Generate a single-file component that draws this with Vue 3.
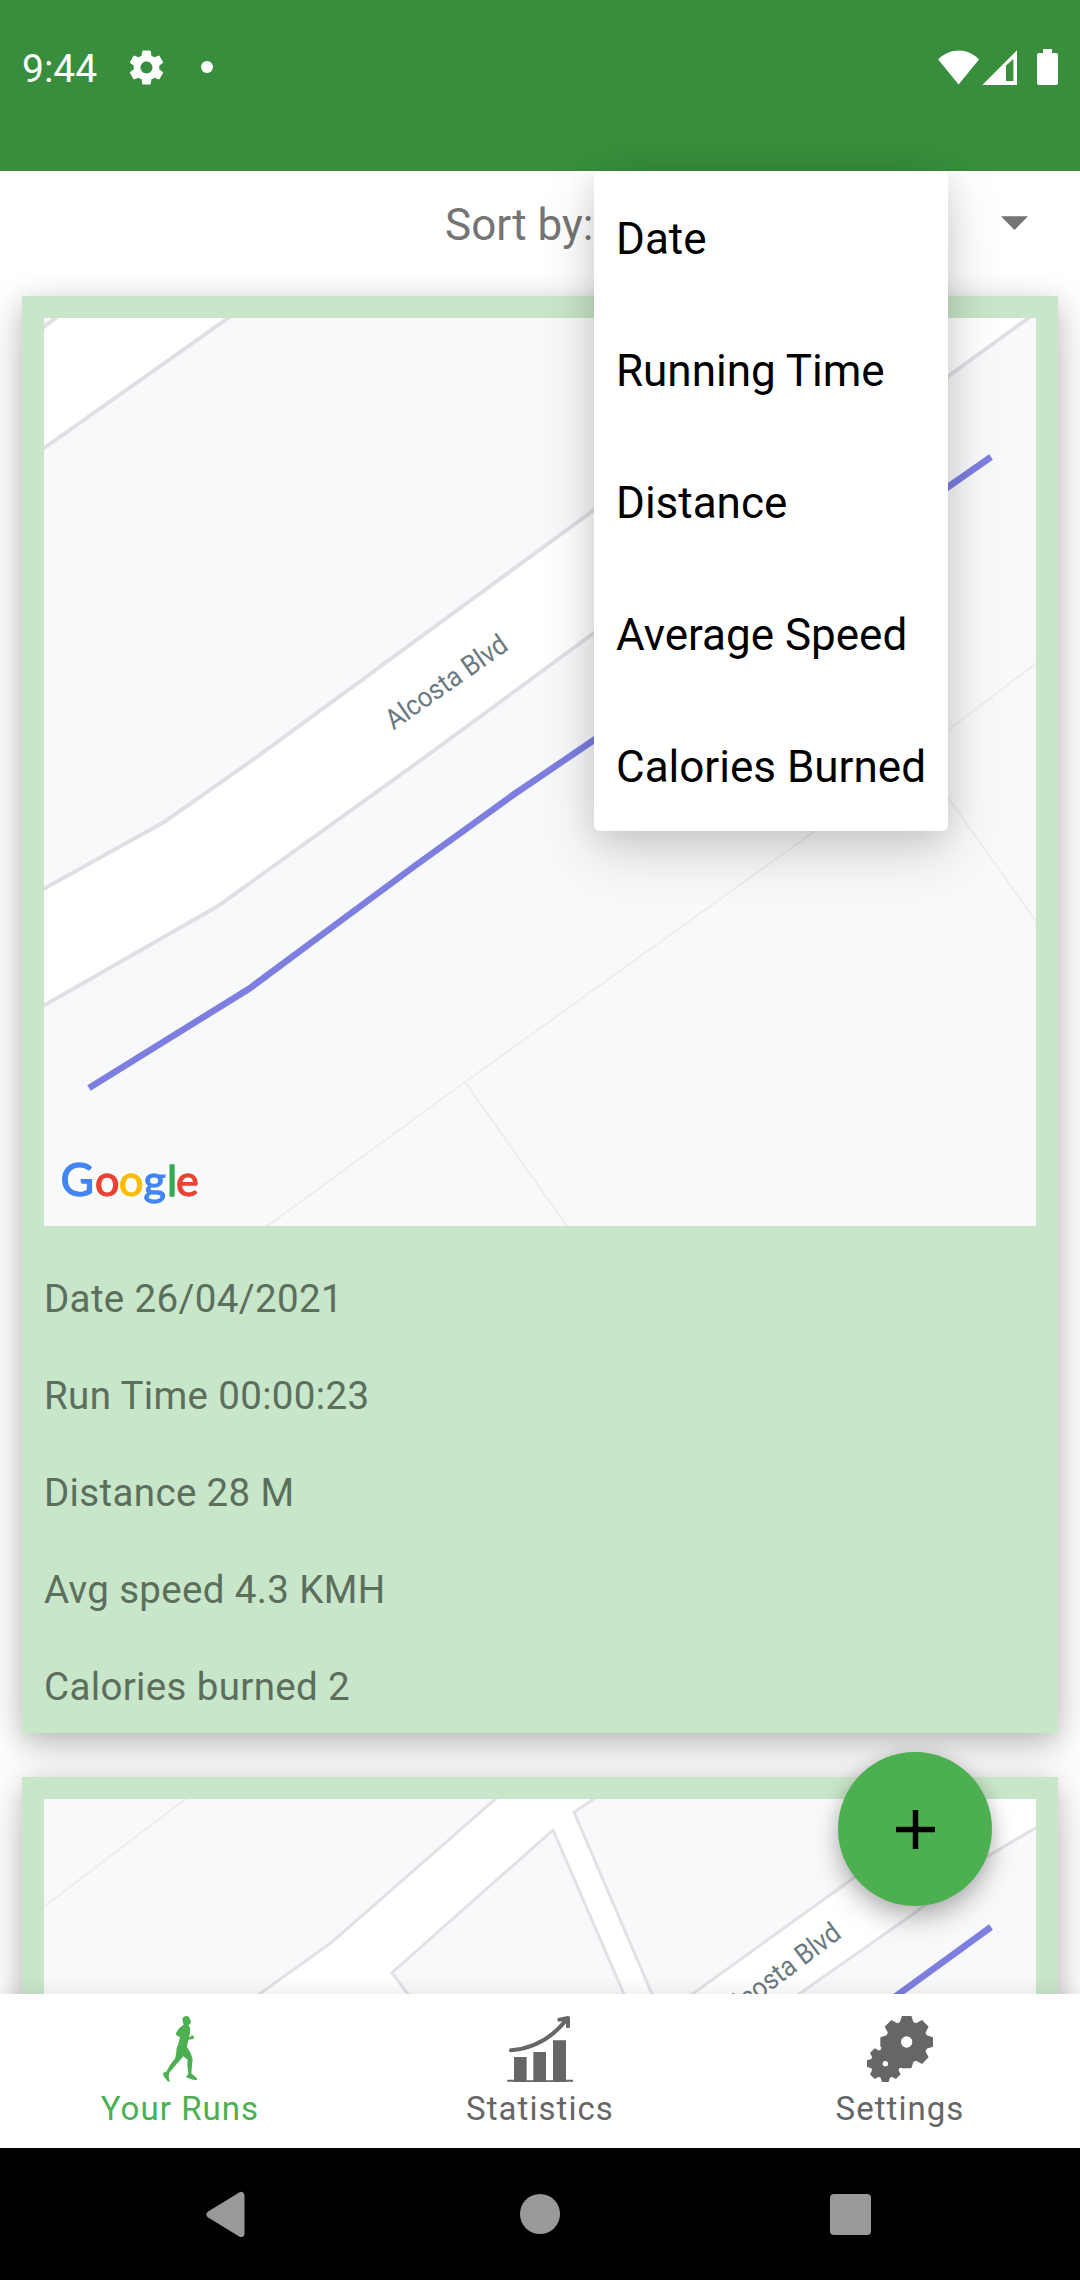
<script setup>
const sortOptions = ['Date', 'Running Time', 'Distance', 'Average Speed', 'Calories Burned']

const runDetails = [
  'Date 26/04/2021',
  'Run Time 00:00:23',
  'Distance 28 M',
  'Avg speed 4.3 KMH',
  'Calories burned 2',
]

// Outline of an eight-toothed gear with a round hole in the middle.
function gear(cx, cy, outer, inner, tip, base, hole) {
  const points = []
  for (let i = 0; i < 8; i++) {
    const a = (i * Math.PI) / 4
    const place = (r, w) => {
      const x = cx + r * Math.sin(a) + w * Math.cos(a)
      const y = cy - r * Math.cos(a) + w * Math.sin(a)
      return `${x.toFixed(1)} ${y.toFixed(1)}`
    }
    points.push(place(inner, -base), place(outer, -tip), place(outer, tip), place(inner, base))
  }
  return (
    `M${points.join('L')}Z` +
    `M${cx - hole} ${cy}a${hole} ${hole} 0 1 0 ${hole * 2} 0a${hole} ${hole} 0 1 0 ${-hole * 2} 0Z`
  )
}

const bigGear = gear(1340, 156, 79, 60, 14, 20, 17)
const smallGear = gear(1276, 221, 55, 42, 10, 14, 8)
</script>

<template>
  <div class="screen">
    <header class="status">
      <span class="clock">9:44</span>
      <svg class="status-gear" viewBox="0 0 24 24" width="41" height="41">
        <path d="M19.43 12.98c.04-.32.07-.64.07-.98s-.03-.66-.07-.98l2.11-1.65c.19-.15.24-.42.12-.64l-2-3.46c-.12-.22-.39-.3-.61-.22l-2.49 1c-.52-.4-1.08-.73-1.69-.98l-.38-2.65C14.46 2.18 14.25 2 14 2h-4c-.25 0-.46.18-.49.42l-.38 2.65c-.61.25-1.17.59-1.69.98l-2.49-1c-.23-.09-.49 0-.61.22l-2 3.46c-.13.22-.07.49.12.64l2.11 1.65c-.04.32-.07.65-.07.98s.03.66.07.98l-2.11 1.65c-.19.15-.24.42-.12.64l2 3.46c.12.22.39.3.61.22l2.49-1c.52.4 1.08.73 1.69.98l.38 2.65c.03.24.24.42.49.42h4c.25 0 .46-.18.49-.42l.38-2.65c.61-.25 1.17-.59 1.69-.98l2.49 1c.23.09.49 0 .61-.22l2-3.46c.12-.22.07-.49-.12-.64l-2.11-1.65zM12 15.5c-1.93 0-3.5-1.57-3.5-3.5s1.57-3.5 3.5-3.5 3.5 1.57 3.5 3.5-1.57 3.5-3.5 3.5z" fill="#fff" />
      </svg>
      <span class="dot"></span>
      <svg class="radios" viewBox="938 46 120 42" width="120" height="42" fill="#fff">
        <path d="M958.6 84.500L938.200 59.500C950 47.600 967.500 47.600 979 59.500Z" />
        <path d="M982.300 85L1017 50.200V85Z" />
        <path d="M1006 65.500L1013.400 59V81H1006Z" fill="#388e3c" />
        <path d="M1043 49h9v4h4q2 0 2 2v28q0 2-2 2h-17q-2 0-2-2v-28q0-2 2-2h4z" />
      </svg>
    </header>

    <div class="sort">
      <span class="sort-label">Sort by:</span>
      <svg class="caret" viewBox="0 0 27 14" width="27" height="14"><path d="M0 .3H27L13.500 14Z" fill="#757575" /></svg>
    </div>

    <main class="runs">
      <article class="card">
        <svg class="map" viewBox="44 318 992 908" width="992" height="908">
          <rect x="44" y="318" width="992" height="908" fill="#f8f9fb" />
          <g stroke="#dfe0e4" stroke-width="4" fill="#fff">
            <path d="M40 329L56 317H229L40 451Z" stroke="none" />
            <path d="M40 330L58 316M40 451L231 316" />
            <path d="M38 892L164.600 821.700L252.600 760L594 510L860 314H1034L594 633L421 760L218 906L38 1009Z" />
          </g>
          <path d="M266 1227L465 1082L815 831L1038 662M465 1082L569 1229M890 716L1040 927" fill="none" stroke="#e9eaec" stroke-width="1.500" />
          <path d="M89 1088L249.500 988.500L335 925L413.300 867L513 795L594 740L948 487L991 457" fill="none" stroke="#7d7ee0" stroke-width="6.500" />
          <text class="road" transform="translate(393.500 730.500) rotate(-35)" textLength="142" lengthAdjust="spacingAndGlyphs">Alcosta Blvd</text>
          <text class="logo" y="1195.500"><tspan x="60.500" font-size="46" fill="#4285f4" stroke="#4285f4">G</tspan><tspan x="95" fill="#ea4335" stroke="#ea4335">o</tspan><tspan x="119" fill="#fbbc05" stroke="#fbbc05">o</tspan><tspan x="143.500" fill="#4285f4" stroke="#4285f4">g</tspan><tspan x="167" fill="#34a853" stroke="#34a853">l</tspan><tspan x="176" fill="#ea4335" stroke="#ea4335">e</tspan></text>
        </svg>
        <div class="details">
          <p v-for="line in runDetails" :key="line">{{ line }}</p>
        </div>
      </article>

      <article class="card">
        <svg class="map" viewBox="44 1799 992 908" width="992" height="908">
          <rect x="44" y="1799" width="992" height="908" fill="#fff" />
          <g fill="#f8f9fb" stroke="#e1e2e5" stroke-width="3">
            <path d="M40 1795H500L332 1942L240 2008H40Z" />
            <path d="M553 1830L392 1972.700L418 2008H630Z" />
            <path d="M600 1795L574 1812L658 2008H673L854 1877.700L970 1795Z" />
            <path d="M1044 1823L988 1856L916 1912L779 2008H1044Z" />
          </g>
          <path d="M42 1908L187 1798" fill="none" stroke="#e9eaec" stroke-width="1.500" />
          <path d="M870 2015L991 1927" fill="none" stroke="#7d7ee0" stroke-width="6.500" />
          <text class="road" transform="translate(729.500 2022) rotate(-37)" textLength="142" lengthAdjust="spacingAndGlyphs">Alcosta Blvd</text>
        </svg>
      </article>
    </main>

    <nav class="tabs">
      <a class="tab active">
        <svg viewBox="81 78 198 198" width="66" height="66" fill="currentColor">
          <path d="M188 84Q192 78 199 78Q208 79 210 88L213 95Q212 104 205 106L210 113V130L207 140H212L215 136L221 137V147L205 149L201 170L212 190L218 208L216 225L214 250L230 264L231 269Q222 271 213 267L198 262L200 257L205 252L202 225L203 209L190 199L170 222L148 248L146 262L150 275L143 274L131 259L129 249L139 245L152 222L165 206L169 188Q168 175 175 162L180 142L169 136L168 129L178 114L191 104Q186 94 188 84Z" />
        </svg>
        <span>Your Runs</span>
      </a>
      <a class="tab">
        <svg viewBox="141 78 198 198" width="66" height="66" fill="currentColor">
          <path d="M162 201h38v70h20v-85h38v85h21v-120h39v118h21v6h-21v1H162v-1h-20v-6h20z" />
          <path d="M153 181Q252 173 318 91M298 89L324 84V109" fill="none" stroke="currentColor" stroke-width="12" stroke-linecap="round" stroke-linejoin="round" />
        </svg>
        <span>Statistics</span>
      </a>
      <a class="tab">
        <svg viewBox="1221 78 198 198" width="66" height="66" fill="currentColor" fill-rule="evenodd">
          <path :d="bigGear" />
          <path :d="smallGear" />
        </svg>
        <span>Settings</span>
      </a>
    </nav>

    <footer class="system">
      <svg viewBox="206 2191 40 47" width="40" height="47"><path d="M241 2195.500V2233.500L210 2214.500Z" fill="#999" stroke="#999" stroke-width="7" stroke-linejoin="round" /></svg>
      <span class="home"></span>
      <span class="recent"></span>
    </footer>

    <ul class="menu">
      <li v-for="option in sortOptions" :key="option">{{ option }}</li>
    </ul>

    <button class="fab" aria-label="Add run">
      <svg viewBox="0 0 39 39" width="39" height="39"><path d="M19.500 0V39M0 19.500H39" stroke="#000" stroke-width="5.500" /></svg>
    </button>
  </div>
</template>

<style>
body {
  margin: 0;
}
</style>

<style scoped>
.screen {
  position: relative;
  display: flex;
  flex-direction: column;
  width: 1080px;
  height: 2280px;
  overflow: hidden;
  background: #fff;
  font-family: Roboto, sans-serif;
}

svg {
  display: block;
  flex: none;
}

.status {
  display: flex;
  align-items: center;
  box-sizing: border-box;
  height: 171px;
  padding: 0 22px 37px;
  background: #388e3c;
  color: #fff;
}

.clock {
  width: 104px;
  padding-top: 4px;
  font-size: 39px;
  line-height: 46px;
}

.dot {
  width: 12px;
  height: 12px;
  margin-left: 34px;
  border-radius: 50%;
  background: #fff;
}

.radios {
  margin-left: auto;
}

.sort {
  display: flex;
  align-items: center;
  justify-content: space-between;
  box-sizing: border-box;
  height: 103px;
  padding: 4px 52px 0 445px;
  color: #757575;
  font-size: 44px;
}

.caret {
  margin-bottom: 4px;
}

.runs {
  display: flex;
  flex: 1;
  flex-direction: column;
  gap: 44px;
  min-height: 0;
  padding: 22px;
  overflow: hidden;
}

.card {
  flex: none;
  box-sizing: border-box;
  height: 1437px;
  padding: 22px 22px 0;
  background: #c8e6c9;
  box-shadow: 0 14px 42px rgba(0, 0, 0, 0.2), 0 6px 22px rgba(0, 0, 0, 0.13);
}

.map {
  overflow: hidden;
}

.road {
  fill: #6b7a80;
  font-size: 28px;
}

.logo {
  font-family: Lato, sans-serif;
  font-size: 43px;
  stroke-width: 1.300px;
  filter: drop-shadow(0 0 2px #fff) drop-shadow(0 0 2px #fff);
}

.details {
  padding-top: 24px;
  color: #5c6e5c;
  font-size: 38.500px;
  letter-spacing: 0.350px;
}

.details p {
  margin: 0;
  line-height: 97px;
}

.tabs {
  z-index: 1;
  display: flex;
  height: 154px;
  background: #fff;
  box-shadow: 0 0 20px rgba(0, 0, 0, 0.1);
}

.tab {
  display: flex;
  flex: 1;
  flex-direction: column;
  align-items: center;
  padding-top: 22px;
  color: #666;
  font-size: 33px;
  letter-spacing: 1.050px;
}

.tab span {
  margin-top: 7px;
  line-height: 39px;
}

.tab.active {
  color: #4caf50;
}

.system {
  z-index: 1;
  display: flex;
  align-items: center;
  justify-content: space-between;
  box-sizing: border-box;
  height: 132px;
  padding: 0 209px 0 206px;
  background: #000;
}

.home {
  width: 40px;
  height: 40px;
  margin-left: 3px;
  border-radius: 50%;
  background: #999;
}

.recent {
  width: 41px;
  height: 41px;
  border-radius: 4px;
  background: #999;
}

.menu {
  position: absolute;
  top: 171px;
  left: 594px;
  width: 354px;
  margin: 0;
  padding: 0;
  border-radius: 6px;
  background: #fff;
  box-shadow: 0 20px 56px rgba(0, 0, 0, 0.17), 0 4px 30px rgba(0, 0, 0, 0.09);
  color: #000;
  font-size: 44px;
  list-style: none;
  z-index: 2;
}

.menu li {
  box-sizing: border-box;
  height: 132px;
  padding: 4px 22px 0;
  line-height: 128px;
  white-space: nowrap;
}

.fab {
  position: absolute;
  top: 1752px;
  left: 838px;
  display: flex;
  align-items: center;
  justify-content: center;
  width: 154px;
  height: 154px;
  padding: 0;
  border: 0;
  border-radius: 50%;
  background: #4caf50;
  box-shadow: 0 13px 26px rgba(0, 0, 0, 0.26), 0 0 16px rgba(0, 0, 0, 0.1);
}
</style>
